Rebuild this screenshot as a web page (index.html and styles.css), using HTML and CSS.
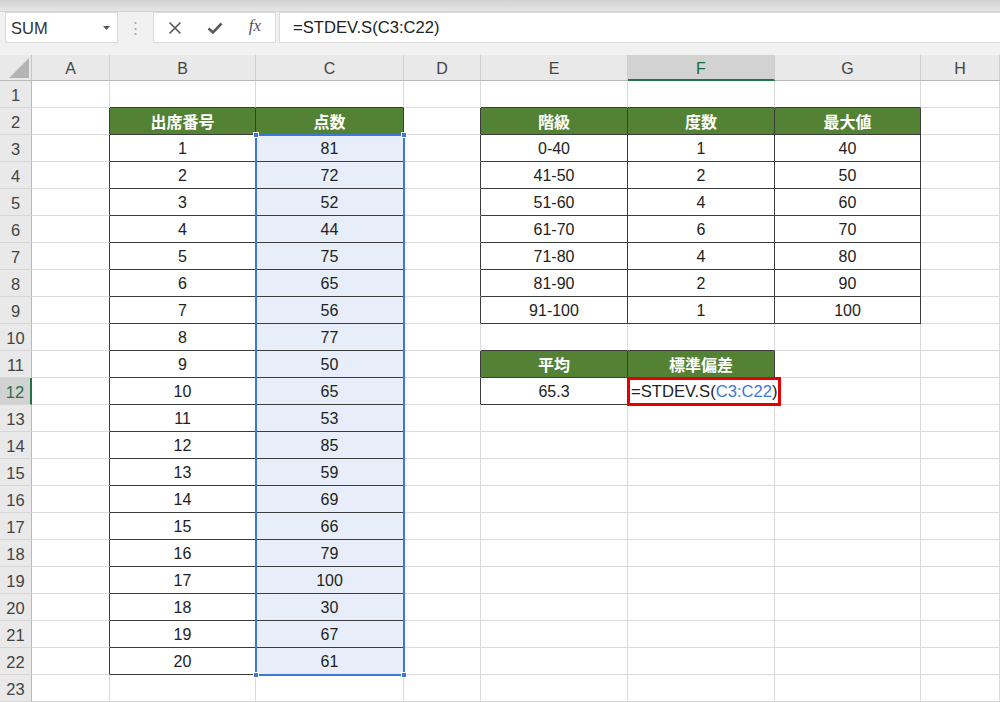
FILE: index.html
```html
<!DOCTYPE html>
<html lang="ja">
<head>
<meta charset="utf-8">
<link rel="stylesheet" href="styles.css">
</head>
<body>
<div class="topband"></div>
<div class="fbar">
  <div class="namebox"><span>SUM</span><svg class="dd" width="7" height="4" viewBox="0 0 7 4"><polygon points="0,0 7,0 3.5,4" fill="#555"/></svg></div>
  <div class="dots">⋮</div>
  <div class="btns">
    <svg width="14" height="14" viewBox="0 0 14 14"><path d="M1.5 1.5 L12.5 12.5 M12.5 1.5 L1.5 12.5" stroke="#5a5a5a" stroke-width="1.6" fill="none"/></svg>
    <svg width="16" height="14" viewBox="0 0 16 14"><path d="M1.5 7.5 L6 11.5 L14.5 2.5" stroke="#5a5a5a" stroke-width="2.6" fill="none"/></svg>
    <span class="fx">fx</span>
  </div>
  <div class="formula">=STDEV.S(C3:C22)</div>
</div>
<div class="gap"></div>
<div class="sheet">
  <div class="corner"><svg width="31" height="25" viewBox="0 0 31 25"><polygon points="9,23 29,3 29,23" fill="#b4b4b4"/></svg></div>
  <div class="ch">A</div><div class="ch">B</div><div class="ch">C</div><div class="ch">D</div><div class="ch">E</div><div class="ch on">F</div><div class="ch">G</div><div class="ch">H</div>

  <div class="rh">1</div><div class="c"></div><div class="c bb"></div><div class="c bb"></div><div class="c"></div><div class="c bb"></div><div class="c bb"></div><div class="c bb"></div><div class="c"></div>

  <div class="rh">2</div><div class="c rb"></div><div class="c t h">出席番号</div><div class="c t h">点数</div><div class="c rb"></div><div class="c t h">階級</div><div class="c t h">度数</div><div class="c t h">最大値</div><div class="c"></div>

  <div class="rh">3</div><div class="c rb"></div><div class="c t">1</div><div class="c t sel">81</div><div class="c rb"></div><div class="c t">0-40</div><div class="c t">1</div><div class="c t">40</div><div class="c"></div>
  <div class="rh">4</div><div class="c rb"></div><div class="c t">2</div><div class="c t sel">72</div><div class="c rb"></div><div class="c t">41-50</div><div class="c t">2</div><div class="c t">50</div><div class="c"></div>
  <div class="rh">5</div><div class="c rb"></div><div class="c t">3</div><div class="c t sel">52</div><div class="c rb"></div><div class="c t">51-60</div><div class="c t">4</div><div class="c t">60</div><div class="c"></div>
  <div class="rh">6</div><div class="c rb"></div><div class="c t">4</div><div class="c t sel">44</div><div class="c rb"></div><div class="c t">61-70</div><div class="c t">6</div><div class="c t">70</div><div class="c"></div>
  <div class="rh">7</div><div class="c rb"></div><div class="c t">5</div><div class="c t sel">75</div><div class="c rb"></div><div class="c t">71-80</div><div class="c t">4</div><div class="c t">80</div><div class="c"></div>
  <div class="rh">8</div><div class="c rb"></div><div class="c t">6</div><div class="c t sel">65</div><div class="c rb"></div><div class="c t">81-90</div><div class="c t">2</div><div class="c t">90</div><div class="c"></div>
  <div class="rh">9</div><div class="c rb"></div><div class="c t">7</div><div class="c t sel">56</div><div class="c rb"></div><div class="c t">91-100</div><div class="c t">1</div><div class="c t">100</div><div class="c"></div>

  <div class="rh">10</div><div class="c rb"></div><div class="c t">8</div><div class="c t sel">77</div><div class="c"></div><div class="c bb"></div><div class="c bb"></div><div class="c"></div><div class="c"></div>

  <div class="rh">11</div><div class="c rb"></div><div class="c t">9</div><div class="c t sel">50</div><div class="c rb"></div><div class="c t h">平均</div><div class="c t h">標準偏差</div><div class="c"></div><div class="c"></div>

  <div class="rh on">12</div><div class="c rb"></div><div class="c t">10</div><div class="c t sel">65</div><div class="c rb"></div><div class="c t">65.3</div><div class="c t"></div><div class="c"></div><div class="c"></div>

  <div class="rh">13</div><div class="c rb"></div><div class="c t">11</div><div class="c t sel">53</div><div class="c"></div><div class="c"></div><div class="c"></div><div class="c"></div><div class="c"></div>
  <div class="rh">14</div><div class="c rb"></div><div class="c t">12</div><div class="c t sel">85</div><div class="c"></div><div class="c"></div><div class="c"></div><div class="c"></div><div class="c"></div>
  <div class="rh">15</div><div class="c rb"></div><div class="c t">13</div><div class="c t sel">59</div><div class="c"></div><div class="c"></div><div class="c"></div><div class="c"></div><div class="c"></div>
  <div class="rh">16</div><div class="c rb"></div><div class="c t">14</div><div class="c t sel">69</div><div class="c"></div><div class="c"></div><div class="c"></div><div class="c"></div><div class="c"></div>
  <div class="rh">17</div><div class="c rb"></div><div class="c t">15</div><div class="c t sel">66</div><div class="c"></div><div class="c"></div><div class="c"></div><div class="c"></div><div class="c"></div>
  <div class="rh">18</div><div class="c rb"></div><div class="c t">16</div><div class="c t sel">79</div><div class="c"></div><div class="c"></div><div class="c"></div><div class="c"></div><div class="c"></div>
  <div class="rh">19</div><div class="c rb"></div><div class="c t">17</div><div class="c t sel">100</div><div class="c"></div><div class="c"></div><div class="c"></div><div class="c"></div><div class="c"></div>
  <div class="rh">20</div><div class="c rb"></div><div class="c t">18</div><div class="c t sel">30</div><div class="c"></div><div class="c"></div><div class="c"></div><div class="c"></div><div class="c"></div>
  <div class="rh">21</div><div class="c rb"></div><div class="c t">19</div><div class="c t sel">67</div><div class="c"></div><div class="c"></div><div class="c"></div><div class="c"></div><div class="c"></div>
  <div class="rh">22</div><div class="c rb"></div><div class="c t">20</div><div class="c t sel">61</div><div class="c"></div><div class="c"></div><div class="c"></div><div class="c"></div><div class="c"></div>
  <div class="rh">23</div><div class="c"></div><div class="c"></div><div class="c"></div><div class="c"></div><div class="c"></div><div class="c"></div><div class="c"></div><div class="c"></div>

  <div class="range"><i class="hd tl"></i><i class="hd tr"></i><i class="hd bl"></i><i class="hd br"></i></div>
  <div class="editor">=STDEV.S(<span class="ref">C3:C22</span>)</div>
</div>
</body>
</html>
```
FILE: styles.css
```css
* { box-sizing: border-box; }
html, body { margin: 0; padding: 0; }
body {
  width: 1000px;
  height: 702px;
  overflow: hidden;
  background: #f1f1f1;
  font-family: "Liberation Sans", Arial, "Noto Sans CJK JP", sans-serif;
  color: #222;
}
.topband {
  height: 12px;
  background: linear-gradient(#d2d2d2, #e6e6e6);
  border-bottom: 1px solid #d2d2d2;
}
.fbar {
  display: flex;
  height: 32px;
  padding: 0 0 1px 5px;
}
.namebox {
  width: 113px;
  background: #fff;
  border: 1px solid #dadada;
  display: flex;
  align-items: center;
  justify-content: space-between;
  padding: 2px 7px 0 5px;
  font-size: 16.5px;
  color: #333;
}
.dd { margin-top: -2px; }
.dots {
  width: 35px;
  display: flex;
  align-items: center;
  justify-content: center;
  color: #a8a8a8;
  font-size: 15px;
}
.btns {
  width: 123px;
  background: #fff;
  border: 1px solid #dadada;
  display: flex;
  align-items: center;
  justify-content: space-between;
  padding: 0 14px 0 14px;
}
.fx {
  font-family: "Liberation Serif", serif;
  font-style: italic;
  font-size: 17px;
  color: #555;
  margin-top: -3px;
}
.formula {
  flex: 1;
  margin-left: 3px;
  background: #fff;
  border: 1px solid #dadada;
  border-right: none;
  display: flex;
  align-items: center;
  padding: 1px 0 0 13px;
  font-size: 16.6px;
  color: #222;
}
.gap { height: 11px; }
.sheet {
  position: relative;
  display: grid;
  grid-template-columns: 32px 78px 146px 148px 77px 147px 147px 146px 1fr;
  grid-template-rows: 26px repeat(23, 27px);
  background: #fff;
}
.corner {
  background: #e9e9e9;
  border-right: 1px solid #c4c4c4;
  border-bottom: 1px solid #b9b9b9;
}
.corner svg { display: block; }
.ch {
  background: #e9e9e9;
  border-right: 1px solid #cdcdcd;
  border-bottom: 1px solid #b9b9b9;
  display: flex;
  align-items: center;
  justify-content: center;
  padding-top: 2px;
  font-size: 16px;
  color: #444;
}
.ch.on {
  background: #d2d2d2;
  color: #1d6b3f;
  border-bottom: 2px solid #217346;
  padding-top: 3px;
}
.rh {
  background: #e9e9e9;
  border-right: 1px solid #b9b9b9;
  border-bottom: 1px solid #d6d6d6;
  display: flex;
  align-items: center;
  justify-content: center;
  padding-top: 2px;
  font-size: 16.5px;
  color: #444;
}
.rh.on {
  background: #d2d2d2;
  color: #217346;
  border-right: 2px solid #217346;
}
.c {
  border-right: 1px solid #dadada;
  border-bottom: 1px solid #dadada;
  display: flex;
  align-items: center;
  justify-content: center;
  padding-top: 2px;
  font-size: 16px;
  color: #222;
  white-space: nowrap;
}
.c.rb { border-right-color: #3d3d3d; }
.c.bb { border-bottom-color: #3d3d3d; }
.c.t { border-right-color: #3d3d3d; border-bottom-color: #3d3d3d; }
.c.h {
  background: #548235;
  color: #fff;
  font-weight: bold;
  font-family: "Noto Sans CJK JP", sans-serif;
  font-size: 16px;
  padding-top: 0;
}
.c.sel { background: #e7eef9; }
.range {
  position: absolute;
  left: 255px;
  top: 79px;
  width: 150px;
  height: 542px;
  border: 2px solid #3c78d8;
}
.hd {
  position: absolute;
  width: 6px;
  height: 6px;
  background: #3c78d8;
  border: 1px solid #fff;
}
.hd.tl { left: -4px; top: -4px; }
.hd.tr { right: -4px; top: -4px; }
.hd.bl { left: -4px; bottom: -4px; }
.hd.br { right: -4px; bottom: -4px; }
.editor {
  position: absolute;
  left: 627px;
  top: 322px;
  width: 154px;
  height: 29px;
  border: 3px solid #e60000;
  background: #fff;
  display: flex;
  align-items: center;
  padding: 1px 0 0 1px;
  font-size: 16.6px;
  color: #222;
  white-space: nowrap;
}
.ref { color: #3c78d8; }
```
